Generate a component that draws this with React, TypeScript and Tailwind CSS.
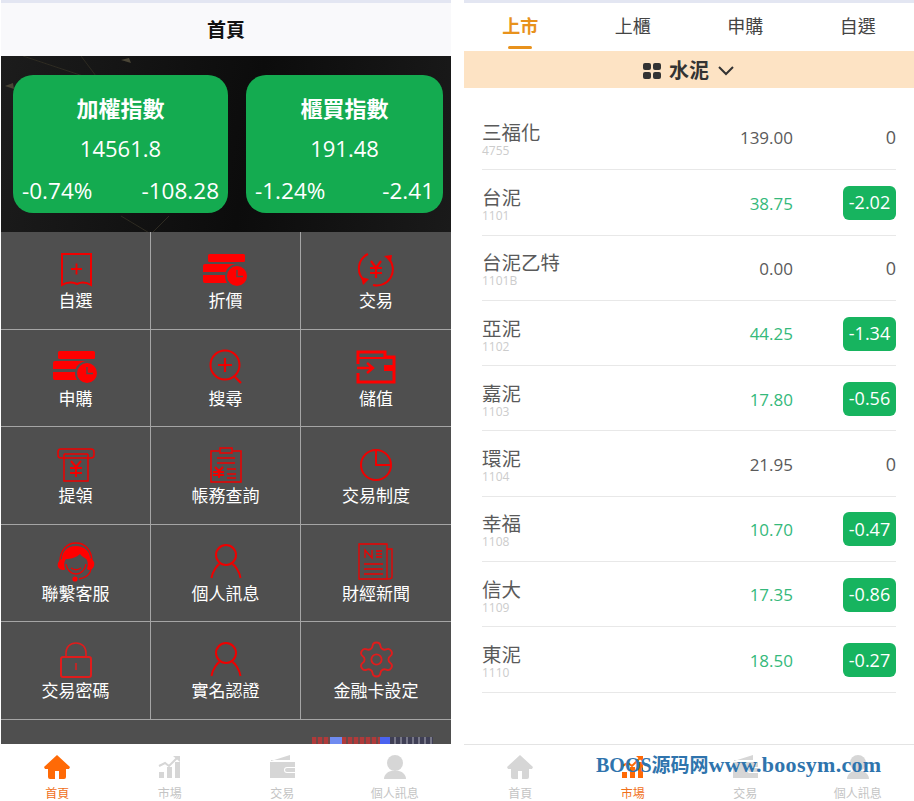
import type { ReactNode } from 'react'
import { Settings } from 'lucide-react'

// Shared drawing props for the thin red menu icons
const line = { fill: 'none', stroke: '#f00000', strokeWidth: 1.5 }

function Svg({ w = 40, h = 36, children }: { w?: number; h?: number; children: ReactNode }) {
  return (
    <svg width={w} height={h} viewBox={`0 0 ${w} ${h}`}>
      {children}
    </svg>
  )
}

function BookmarkIcon() {
  return (
    <Svg>
      <path {...line} strokeWidth={2} d="M6 2h29v31c-5-3-10-3-14-1-5-2-10-2-15 1z" />
      <path {...line} strokeWidth={1.8} d="M15 17h11M20.500 11.500v11" />
    </Svg>
  )
}

function StackIcon() {
  return (
    <svg width={46} height={34} viewBox="0 0 46 34">
      <rect x="5" y="1" width="37" height="8" rx="1.5" fill="#ff0000" />
      <path fill="#ff0000" d="M0 13a2 2 0 0 1 2-2h34v8H0zM0 22h30v8H2a2 2 0 0 1-2-2z" />
      <circle cx="34" cy="23" r="12" fill="#4f4f4f" />
      <circle cx="34" cy="23" r="10" fill="#ff0000" />
      <path fill="none" stroke="#4f4f4f" strokeWidth="1.4" d="M34 17v6.500h6" />
    </svg>
  )
}

function TradeIcon() {
  return (
    <Svg>
      <path {...line} strokeWidth={2} d="M12 2A16 16 0 0 0 9 29M32 6A16 16 0 0 1 17 33" />
      <path fill="#f00000" d="M5 25l8 2-6 6zM28 4l8-1-1 7z" />
      <path {...line} strokeWidth={2.2} d="M15 9l5 7 5-7M14 16h12M14 21h12M20 16v10" />
    </Svg>
  )
}

function SearchPlusIcon() {
  return (
    <Svg>
      <circle {...line} strokeWidth={2} cx="19" cy="16" r="14.500" />
      <path {...line} strokeWidth={2.2} d="M12 16h14M19 9v14M29 28l6 6" />
    </Svg>
  )
}

function WalletIcon() {
  return (
    <svg width={40} height={34} viewBox="0 0 40 34">
      <path fill="none" stroke="#ff0000" strokeWidth="3" d="M2 14V2h27v5h9v25H2v-9" />
      <path fill="none" stroke="#ff0000" strokeWidth="2" d="M2 8h36" />
      <path fill="none" stroke="#ff0000" strokeWidth="2.400" d="M1 18h15M11 13l6 5-6 5" />
      <rect x="28" y="15" width="10" height="6" fill="#ff0000" />
    </svg>
  )
}

function AtmIcon() {
  return (
    <Svg>
      <rect {...line} x="2" y="2" width="36" height="9" rx="3" />
      <path {...line} d="M8 7h24M8 7v27h24V7" />
      <path {...line} strokeWidth={2} d="M15 14l5 6 5-6M14 21h12M14 26h12M20 20v10" />
    </Svg>
  )
}

function ClipboardIcon() {
  return (
    <svg width={34} height={36} viewBox="0 0 34 36">
      <path {...line} d="M10 4H2v31h30V4h-8" />
      <rect {...line} x="11" y="1" width="12" height="5" />
      <path {...line} d="M8 11h18M8 16h18M18 22h9M18 27h9M18 31h9" />
      <path {...line} strokeWidth={2} d="M6 20l4 4 4-4M4 25h11M4 28h11M10 24v7" />
    </svg>
  )
}

function PieIcon() {
  return (
    <svg width={34} height={34} viewBox="0 0 34 34">
      <circle fill="none" stroke="#f00000" strokeWidth="2" cx="17" cy="17" r="15" />
      <path fill="none" stroke="#f00000" strokeWidth="2" d="M17 2v15h15" />
    </svg>
  )
}

function AgentIcon() {
  return (
    <svg width={40} height={40} viewBox="0 0 40 40">
      <path fill="none" stroke="#f00000" strokeWidth="1.400" d="M4 20C4 8 11 1 20 1s16 7 16 19" />
      <path
        fill="#ff0000"
        d="M20 4C11 4 6 10 6 17c-3 1-5 4-4 8 1 2 3 3 5 3 1 0 2 0 2-1-1-3-1-8 1-10 4 0 10-1 14-5 2 3 6 4 7 6 1 3 1 6 0 9 1 1 2 1 3 1 3-1 5-4 4-8-1-2-2-3-4-4C34 9 28 4 20 4z"
      />
      <path fill="none" stroke="#f00000" strokeWidth="1.400" d="M10 22c1 6 5 10 10 10s9-4 10-10M15 26c3 2 7 2 10 0M35 27c-1 6-6 9-12 10" />
      <circle cx="19" cy="37" r="2.600" fill="#ff0000" />
    </svg>
  )
}

function PersonIcon() {
  return (
    <svg width={32} height={36} viewBox="0 0 32 36">
      <circle fill="none" stroke="#f00000" strokeWidth="2" cx="16" cy="11" r="10" />
      <path fill="none" stroke="#f00000" strokeWidth="2" d="M1.500 34c1-7 6-13 8-14M30.500 34c-1-7-6-13-8-14" />
    </svg>
  )
}

function NewsIcon() {
  return (
    <svg width={36} height={38} viewBox="0 0 36 38">
      <path {...line} strokeWidth={1.300} d="M1 1h28v35H1zM29 6h5v28c0 2-2 2-5 2" />
      <path {...line} strokeWidth={1.300} d="M7 15V7l7 8V7M18 8h6M18 11h6M18 14h6M6 21h19M6 26h19M6 31h19" />
    </svg>
  )
}

function LockIcon() {
  return (
    <svg width={32} height={36} viewBox="0 0 32 36">
      <path fill="none" stroke="#e01c1c" strokeWidth="1.600" d="M6 15v-4C6 5 10 1 16 1s10 4 10 10v4" />
      <rect fill="none" stroke="#e01c1c" strokeWidth="2" x="1" y="15" width="30" height="20" rx="2" />
      <path fill="none" stroke="#e01c1c" strokeWidth="1.500" d="M16 21v7" />
    </svg>
  )
}

function GearIcon() {
  return <Settings size={41} strokeWidth={1.1} color="#e01c1c" />
}

const menu: { label: string; icon: ReactNode }[] = [
  { label: '自選', icon: <BookmarkIcon /> },
  { label: '折價', icon: <StackIcon /> },
  { label: '交易', icon: <TradeIcon /> },
  { label: '申購', icon: <StackIcon /> },
  { label: '搜尋', icon: <SearchPlusIcon /> },
  { label: '儲值', icon: <WalletIcon /> },
  { label: '提領', icon: <AtmIcon /> },
  { label: '帳務查詢', icon: <ClipboardIcon /> },
  { label: '交易制度', icon: <PieIcon /> },
  { label: '聯繫客服', icon: <AgentIcon /> },
  { label: '個人訊息', icon: <PersonIcon /> },
  { label: '財經新聞', icon: <NewsIcon /> },
  { label: '交易密碼', icon: <LockIcon /> },
  { label: '實名認證', icon: <PersonIcon /> },
  { label: '金融卡設定', icon: <GearIcon /> },
]

const stocks = [
  { name: '三福化', code: '4755', price: '139.00', change: '0', up: false },
  { name: '台泥', code: '1101', price: '38.75', change: '-2.02', up: true },
  { name: '台泥乙特', code: '1101B', price: '0.00', change: '0', up: false },
  { name: '亞泥', code: '1102', price: '44.25', change: '-1.34', up: true },
  { name: '嘉泥', code: '1103', price: '17.80', change: '-0.56', up: true },
  { name: '環泥', code: '1104', price: '21.95', change: '0', up: false },
  { name: '幸福', code: '1108', price: '10.70', change: '-0.47', up: true },
  { name: '信大', code: '1109', price: '17.35', change: '-0.86', up: true },
  { name: '東泥', code: '1110', price: '18.50', change: '-0.27', up: true },
]

function IndexCard({ title, value, pct, diff, className }: { title: string; value: string; pct: string; diff: string; className: string }) {
  return (
    <div className={`flex h-[138px] flex-col rounded-[20px] bg-[#14ab50] text-white ${className}`}>
      <div className="mt-[16px] text-center text-[22px] leading-[34px] font-bold">{title}</div>
      <div className="mt-[7px] text-center text-[22px] leading-[32px]">{value}</div>
      <div className="mt-[10px] flex justify-between px-[9px] text-[22.5px] leading-[34px]">
        <span>{pct}</span>
        <span>{diff}</span>
      </div>
    </div>
  )
}

// Bottom navigation glyphs, coloured by the active state
function HomeGlyph({ color }: { color: string }) {
  return (
    <svg width={26} height={24} viewBox="0 0 26 24">
      <path fill={color} d="M13 0L0 12l1 2h3v8a2 2 0 0 0 2 2h5v-8h4v8h5a2 2 0 0 0 2-2v-8h3l1-2z" />
    </svg>
  )
}

function ChartGlyph({ color }: { color: string }) {
  return (
    <svg width={24} height={24} viewBox="0 0 24 24">
      <path fill={color} d="M1 17h5v6H1zM9 12h5v11H9zM17 7h5v16h-5z" />
      <path fill="none" stroke={color} strokeWidth="2" d="M1 11l6-3 4 3 8-8" />
      <path fill={color} d="M15 1h7v6z" />
    </svg>
  )
}

function WalletGlyph({ color }: { color: string }) {
  return (
    <svg width={25} height={24} viewBox="0 0 25 24">
      <path fill={color} d="M1 6L20 0v5H1z" />
      <path fill={color} fillRule="evenodd" d="M0 7h25v5h-8a3 3 0 0 0 0 6h8v5H0zM25 13v4h-8a2 2 0 0 1 0-4z" />
    </svg>
  )
}

function PersonGlyph({ color }: { color: string }) {
  return (
    <svg width={22} height={24} viewBox="0 0 22 24">
      <circle cx="11" cy="8" r="8" fill={color} />
      <path fill={color} d="M0 24c0-4 3-7 7-8h8c4 1 7 4 7 8z" />
    </svg>
  )
}

function BottomNav({ active }: { active: number }) {
  const items = [
    { label: '首頁', Glyph: HomeGlyph },
    { label: '市場', Glyph: ChartGlyph },
    { label: '交易', Glyph: WalletGlyph },
    { label: '個人訊息', Glyph: PersonGlyph },
  ]
  return (
    <div className="grid h-[57px] grid-cols-4 bg-white">
      {items.map(({ label, Glyph }, i) => (
        <div key={label} className="flex flex-col items-center pt-[10px]">
          <div className="flex h-[26px] items-center">
            <Glyph color={i === active ? '#ff6a06' : '#d6d6d6'} />
          </div>
          <span className={`mt-[6px] text-[12px] leading-[15px] ${i === active ? 'text-[#f0701a]' : 'text-[#c4c4c4]'}`}>{label}</span>
        </div>
      ))}
    </div>
  )
}

function HomePanel() {
  return (
    <div className="flex h-[801px] w-[450px] flex-col">
      <div className="h-[3px] bg-[#e3e6f2]" />
      <div className="flex h-[53px] items-center justify-center bg-[#f9f9fb] pt-[1px] text-[19px] font-bold text-[#111]">首頁</div>
      <div className="relative flex h-[176px] gap-[18px] overflow-hidden bg-[linear-gradient(100deg,#1c1c1c,#0c0c0c_55%,#1a1a1a)] pt-[19px] pl-[12px]">
        <svg className="absolute inset-0" width={450} height={176} viewBox="0 0 450 176">
          <path fill="none" stroke="#2e2b22" strokeWidth="1" d="M22 0l60 20M80 0l30 40M120 160l30 18 18-18" />
          <path fill="#4a4536" d="M120 4l8-2 2 5zM4 30l8-3 1 6z" />
        </svg>
        <IndexCard className="relative w-[215px]" title="加權指數" value="14561.8" pct="-0.74%" diff="-108.28" />
        <IndexCard className="relative w-[197px]" title="櫃買指數" value="191.48" pct="-1.24%" diff="-2.41" />
      </div>
      <div className="flex flex-1 flex-col bg-[#4f4f4f]">
        <div className="grid grid-cols-3">
          {menu.map((m, i) => (
            <div
              key={m.label}
              className={`flex h-[97.5px] flex-col items-center border-b border-[#a5a5a5] ${i % 3 === 2 ? '' : 'border-r'}`}
            >
              <div className="mt-[18px] flex h-[39px] items-center justify-center">{m.icon}</div>
              <span className="text-[17px] leading-[24px] text-white">{m.label}</span>
            </div>
          ))}
        </div>
        <div className="flex flex-1 items-end justify-end pr-[18px]">
          <div className="flex h-[7px] w-[121px]">
            <span className="w-[18px] bg-[repeating-linear-gradient(90deg,#b03a3a_0,#b03a3a_4px,#6a4a4a_4px,#6a4a4a_6px)]" />
            <span className="w-[12px] bg-[#6f8bf0]" />
            <span className="w-[38px] bg-[repeating-linear-gradient(90deg,#b03a3a_0,#b03a3a_4px,#6a4a4a_4px,#6a4a4a_6px)]" />
            <span className="w-[10px] bg-[#4a63f0]" />
            <span className="flex-1 bg-[repeating-linear-gradient(90deg,#3f3f55_0,#3f3f55_4px,#777788_4px,#777788_6px)]" />
          </div>
        </div>
      </div>
      <BottomNav active={0} />
    </div>
  )
}

function MarketPanel() {
  const tabs = ['上市', '上櫃', '申購', '自選']
  return (
    <div className="flex h-[801px] w-[450px] flex-col bg-white">
      <div className="h-[3px] bg-[#e3e6f2]" />
      <div className="grid h-[48px] grid-cols-4">
        {tabs.map((t, i) => (
          <div key={t} className="relative flex items-center justify-center pb-[2px]">
            <span className={`text-[18px] ${i === 0 ? 'font-bold text-[#e8921c]' : 'text-[#444]'}`}>{t}</span>
            {i === 0 && <span className="absolute bottom-[2px] h-[3px] w-[24px] rounded-sm bg-[#e8921c]" />}
          </div>
        ))}
      </div>
      <div className="flex h-[37px] items-center justify-center gap-[8px] bg-[#fde3c4] pt-[2px] text-[20px] font-bold text-[#333]">
        <svg width={18} height={16} viewBox="0 0 18 16">
          <rect x="0" y="0" width="8" height="7" rx="2" fill="#333" />
          <rect x="10" y="0" width="8" height="7" rx="2" fill="#333" />
          <rect x="0" y="9" width="8" height="7" rx="2" fill="#333" />
          <rect x="10" y="9" width="8" height="7" rx="2" fill="#333" />
        </svg>
        <span>水泥</span>
        <svg width={18} height={10} viewBox="0 0 18 10">
          <path fill="none" stroke="#333" strokeWidth="2" d="M2 1l7 7 7-7" />
        </svg>
      </div>
      <div className="flex-1 px-[18px] pt-[17px]">
        {stocks.map((s) => (
          <div key={s.code} className="flex h-[65.3px] items-center border-b border-[#e8e8e8]">
            <div className="flex-1 pt-[4px]">
              <div className="text-[19.5px] leading-[21px] text-[#5a5a5a]">{s.name}</div>
              <div className="mt-[1px] text-[12px] leading-[13px] text-[#cccccc]">{s.code}</div>
            </div>
            <div className={`w-[120px] pt-[2px] text-right text-[17px] ${s.up ? 'text-[#35b97b]' : 'text-[#5a5a5a]'}`}>{s.price}</div>
            <div className="flex w-[103px] justify-end pt-[1px]">
              {s.up ? (
                <span className="flex h-[34px] w-[53px] items-center justify-center rounded-[6px] bg-[#17b45f] text-[18px] text-white">{s.change}</span>
              ) : (
                <span className="text-[18px] text-[#5a5a5a]">{s.change}</span>
              )}
            </div>
          </div>
        ))}
      </div>
      <div className="relative h-[57px] overflow-hidden border-t border-[#e4e4e4]">
        <div className="-mt-px">
          <BottomNav active={1} />
        </div>
        <div className="absolute top-[4px] left-[132px] font-['Liberation_Serif','Noto_Sans_CJK_SC',serif] text-[20px] leading-[32px] font-bold whitespace-nowrap text-[#2f74ad]">
          BOOS<span className="text-[19px]">源码网</span>
          <span className="text-[22px] tracking-[0.3px]">www.boosym.com</span>
        </div>
      </div>
    </div>
  )
}

export default function App() {
  return (
    <div className="flex h-[801px] w-[914px] overflow-hidden bg-white font-['Open_Sans','Noto_Sans_CJK_TC',sans-serif]">
      <div className="ml-[1px]">
        <HomePanel />
      </div>
      <div className="ml-[13px]">
        <MarketPanel />
      </div>
    </div>
  )
}
